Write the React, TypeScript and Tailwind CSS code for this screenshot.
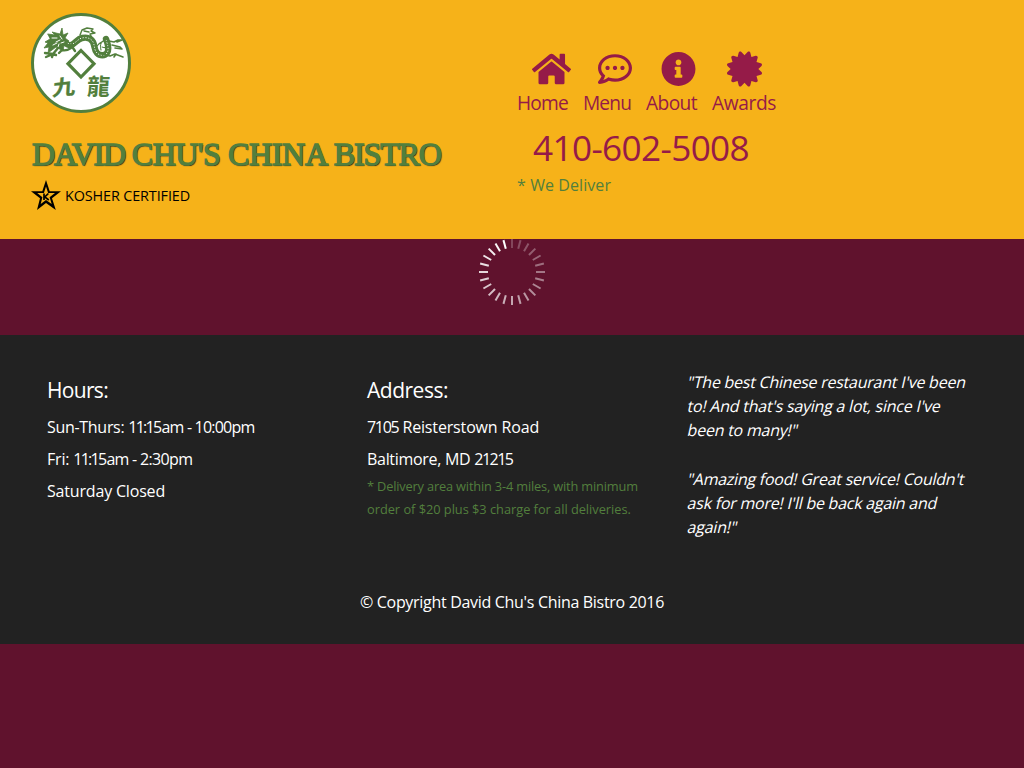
import React from "react";
import { FaHome, FaRegCommentDots, FaInfoCircle, FaCertificate } from "react-icons/fa";

function Logo() {
  return (
    <svg className="block h-[100px] w-[100px]" viewBox="0 0 100 100" fill="none" stroke="#527f3d" strokeLinecap="round" strokeLinejoin="round">
      <circle cx="50" cy="50" r="48.5" fill="#fff" strokeWidth="3" />
      <path d="M50 37.5 63 50.7 50 64 37 50.7Z" strokeWidth="3.2" strokeLinejoin="miter" />
      {/* body */}
      <path d="M31 29c4 0 5 4 9 3s6-6 11-7 9 0 11 4 1 8 4 11 8 3 10 0 1-9-1-14" strokeWidth="6.4" />
      <path d="M32 28c4 0 5 4 9 3s6-5 10-6 9 0 11 4 1 8 4 11 8 3 10 0 1-8-1-13" stroke="#fff" strokeWidth="1" strokeDasharray=".4 2.4" />
      <path d="M66 33c3-4 7-5 10-7M70 37c-2-5 1-9 5-11M71 34c3 1 6 1 8-2" strokeWidth="1.2" />
      {/* head and horns */}
      <path d="m17 21 7 1-3-3 8 2 2-6 1 7 5-2-3 5 4 3-5 4-1 6-7-4-8 6 1-6-5 1 4-5-3-1 5-3Z" fill="#527f3d" strokeWidth=".8" />
      <path d="M21 25h5M25 29l4-2M22 32l4-2M29 23l2 3M30 30l3-1M27 34l1-3" stroke="#fff" strokeWidth="1" />
      {/* claws */}
      <path d="m27 35-5 6-8-1m8 1-7 3m7-3-1 3m1-3 3 1" strokeWidth="2.4" />
      <path d="M40 35c-3 2-6 3-9 2m9-5 4 6M31 37l-3 3" strokeWidth="2.4" />
      <path d="m49 22 2-5 5-2 6 1-2 2 4 2-5 1 1 2M53 18l5 1" strokeWidth="1.4" />
      <path d="m71 41 8 2 5-2 8 3m-7-3-2 3M78 28l5 1m0 0 4-2h4l-5 2m-5 3 8 2 2 2-7-1" strokeWidth="1.6" />
      <g fill="#527f3d" fontSize="23" fontWeight="700" style={{ fontFamily: "'Noto Sans CJK TC', sans-serif" }}>
        <text transform="translate(21 83) rotate(-6) skewX(-10) scale(1 .9)" strokeWidth=".3">九</text>
        <text transform="translate(55.5 82) skewX(-4)" strokeWidth="0">龍</text>
      </g>
    </svg>
  );
}

function KosherStar() {
  return (
    <svg className="h-[30px] w-[30px]" viewBox="0 0 30 30">
      <path
        fillRule="evenodd"
        d="M15 0 18.7 11.2H30L21 18.3 24.8 30 15 23 6 30 9 18.3 0 11.2H11.3ZM15 6.5 12.9 13H6.2L11.4 17.3 9.7 24 15 20 20.7 24 18.6 17.3 24 13H17.1Z"
      />
      <path d="M13 13.5v6.5M17.4 13.5l-3.6 3.4 4 3.1" fill="none" stroke="#000" strokeWidth="1.7" />
    </svg>
  );
}

function Spinner() {
  return (
    <svg className="h-[66px] w-[66px]" viewBox="-33 -33 66 66">
      {Array.from({ length: 24 }, (_, i) => (
        <path key={i} d="M0-24V-33" stroke="#fff" strokeWidth="2" strokeOpacity={0.22 + (i / 23) * 0.78} transform={`rotate(${i * 15})`} />
      ))}
    </svg>
  );
}

const nav = [
  { label: "Home", Icon: FaHome, box: "w-[66px]", icon: "ml-[15px] w-[39px]", text: "tracking-[-0.81px]" },
  { label: "Menu", Icon: FaRegCommentDots, box: "w-[63px]", icon: "ml-[15px] w-[34px]", text: "tracking-[-0.89px]" },
  { label: "About", Icon: FaInfoCircle, box: "w-[66px]", icon: "ml-[15px] w-[35px]", text: "tracking-[-0.6px]" },
  { label: "Awards", Icon: FaCertificate, box: "w-[70px]", icon: "ml-[15px] w-[35px]", text: "tracking-[-0.4px]" },
];

const quotes = [
  ["\"The best Chinese restaurant I've been", "to! And that's saying a lot, since I've", "been to many!\""],
  ["\"Amazing food! Great service! Couldn't", "ask for more! I'll be back again and", "again!\""],
];

function Opening() {
  return (
    <>
      <span className="tracking-[-1.7px]">11:1</span>
      <span className="tracking-[-0.8px]">5am</span>
    </>
  );
}

export default function App() {
  return (
    <div className="min-h-screen bg-[#60122d] font-['Open_Sans','Noto_Sans',sans-serif] text-base text-white">
      <header className="flex h-[239px] bg-[#f6b219] whitespace-nowrap">
        <div className="w-[517px] pt-[13px] pl-[31px]">
          <Logo />
          <h1 className="mt-[19px] h-[44px] pl-px font-['Liberation_Serif',serif] text-[32px] leading-[44px] font-normal text-[#527f3d] [-webkit-text-stroke:1.4px_#527f3d] [text-shadow:1px_1px_1px_#1f1f1f]">
            <span className="tracking-[-1.2px]">DAVID </span>
            <span className="tracking-[-0.5px]">CHU'S </span>
            <span className="tracking-[-0.3px]">CHINA </span>
            <span className="tracking-[-1.1px]">BISTRO</span>
          </h1>
          <div className="mt-[4px] flex h-[30px] items-center text-[14.4px] tracking-[-0.12px] text-black">
            <KosherStar />
            <span className="mt-px ml-[4px]">KOSHER CERTIFIED</span>
          </div>
        </div>
        <div className="pt-[51px] text-[#951b48]">
          <nav className="flex">
            {nav.map(({ label, Icon, box, icon, text }) => (
              <a key={label} className={box}>
                <Icon className={`block h-[36px] ${icon}`} />
                <span className={`mt-px block text-[19.2px] leading-[30px] ${text}`}>{label}</span>
              </a>
            ))}
          </nav>
          <div className="mt-[2px] pl-[16px] text-[35.2px] leading-[54px] tracking-[-0.65px]">410-602-5008</div>
          <div className="mt-px text-base leading-[20px] tracking-[0.08px] text-[#527f3d]">* We Deliver</div>
        </div>
      </header>
      <main className="flex h-24 justify-center">
        <Spinner />
      </main>
      <footer className="h-[309px] bg-[#222222] pt-[36px] whitespace-nowrap">
        <div className="flex h-[214px] pl-[47px]">
          <section className="w-[320px]">
            <h3 className="h-[40px] text-[21px] leading-[38px] tracking-[-0.68px]">Hours:</h3>
            <p className="leading-8"><span className="tracking-[-0.3px]">Sun-Thurs: </span><Opening /><span className="tracking-[-0.8px]"> - 10:00pm</span></p>
            <p className="leading-8"><span className="tracking-[-0.2px]">Fri: </span><Opening /><span className="tracking-[-0.65px]"> - 2:30pm</span></p>
            <p className="leading-8 tracking-[-0.18px]">Saturday Closed</p>
          </section>
          <section className="w-[320px]">
            <h3 className="h-[40px] text-[21px] leading-[38px] tracking-[-0.49px]">Address:</h3>
            <p className="leading-8"><span className="tracking-[-1.3px]">7105</span><span className="tracking-[-0.15px]"> Reisterstown Road</span></p>
            <p className="leading-8"><span className="tracking-[-0.3px]">Baltimore, MD </span><span className="tracking-[-1.5px]">21215</span></p>
            <div className="text-[12.8px] leading-[23px] text-[#527f3d]">
              <p className="tracking-[-0.17px]">* Delivery area within 3-4 miles, with minimum</p>
              <p className="tracking-[-0.02px]">order of $20 plus $3 charge for all deliveries.</p>
            </div>
          </section>
          <section className="-mt-px w-[290px] pl-px leading-[24px] tracking-[-0.24px]">
            {quotes.map((lines) => (
              <p key={lines[0]} className="mb-[25px]">
                {lines.map((line) => (
                  <span key={line} className="block -skew-x-[13deg]">{line}</span>
                ))}
              </p>
            ))}
          </section>
        </div>
        <p className="text-center leading-[34px] tracking-[-0.31px]">© Copyright David Chu's China Bistro 2016</p>
      </footer>
    </div>
  );
}
